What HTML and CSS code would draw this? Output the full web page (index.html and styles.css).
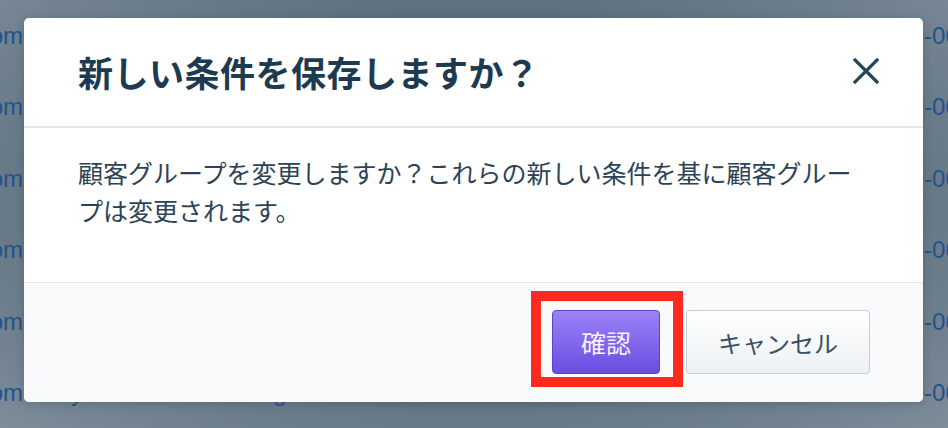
FILE: index.html
```html
<!DOCTYPE html>
<html lang="ja">
<head>
    <meta charset="UTF-8">
    <meta name="viewport" content="width=device-width, initial-scale=1.0">
    <title>条件の保存</title>
    <link rel="stylesheet" href="styles.css">
</head>
<body>
    <!-- Customer list behind the overlay -->
    <div class="customer-list">
        <div class="customer-row"><span class="cell-email">sato@example.com</span><span class="cell-name"></span><span class="cell-tel">090-0000-0000</span></div>
        <div class="customer-row"><span class="cell-email">suzuki@example.com</span><span class="cell-name"></span><span class="cell-tel">090-0000-0000</span></div>
        <div class="customer-row"><span class="cell-email">tanaka@example.com</span><span class="cell-name"></span><span class="cell-tel">090-0000-0000</span></div>
        <div class="customer-row"><span class="cell-email">ito@example.com</span><span class="cell-name"></span><span class="cell-tel">090-0000-0000</span></div>
        <div class="customer-row"><span class="cell-email">kato@example.com</span><span class="cell-name"></span><span class="cell-tel">090-0000-0000</span></div>
        <div class="customer-row"><span class="cell-email">kimura@example.com</span><span class="cell-name">y<span class="gap">taro.yamada@</span>g</span><span class="cell-tel">090-0000-0000</span></div>
    </div>

    <div class="overlay">
        <div class="modal">
            <div class="modal-header">
                <h2>新しい条件を保存しますか？</h2>
                <button class="close-btn" aria-label="閉じる">
                    <svg width="26" height="26" viewBox="0 0 26 26">
                        <path d="M2 2 L24 24 M24 2 L2 24" stroke="#26445a" stroke-width="3.2" stroke-linecap="square" fill="none"/>
                    </svg>
                </button>
            </div>
            <div class="modal-body">
                <p>顧客グループを変更しますか？これらの新しい条件を基に顧客グループは変更されます。</p>
            </div>
            <div class="modal-footer">
                <span class="highlight">
                    <button class="btn btn-primary">確認</button>
                </span>
                <button class="btn btn-default">キャンセル</button>
            </div>
        </div>
    </div>
</body>
</html>
```

FILE: styles.css
```css
/* Basic Reset */
* {
    margin: 0;
    padding: 0;
    box-sizing: border-box;
}

body {
    width: 948px;
    height: 428px;
    overflow: hidden;
    position: relative;
    font-family: "Noto Sans CJK JP", sans-serif;
    background: radial-gradient(ellipse farthest-corner at 50% 45%, #55677a 0%, #5e7080 55%, #7d8c99 100%);
}

/* Background table (dimmed) */
.customer-list {
    font-family: "Liberation Sans", Arial, sans-serif;
    font-size: 24px;
    color: #22548a;
}

.customer-row {
    height: 71.5px;
    display: flex;
    align-items: center;
    white-space: nowrap;
}

.cell-email {
    width: 23px;
    flex-shrink: 0;
    display: flex;
    justify-content: flex-end;
    margin-right: 48px;
}

.cell-name {
    width: 813px;
    flex-shrink: 0;
}

.cell-name .gap {
    display: inline-block;
    width: 190px;
    visibility: hidden;
}

/* Modal */
.overlay {
    position: absolute;
    top: 0;
    left: 0;
    right: 0;
    bottom: 0;
}

.modal {
    position: absolute;
    top: 18px;
    left: 24px;
    width: 899px;
    background-color: white;
    border-radius: 5px;
    overflow: hidden;
    box-shadow: 0 2px 10px rgba(0, 0, 0, 0.15);
}

.modal-header {
    height: 110px;
    display: flex;
    align-items: center;
    justify-content: space-between;
    padding: 0 44px 2px 54px;
    border-bottom: 2px solid #dfe8ec;
}

.modal-header h2 {
    font-size: 35px;
    line-height: 1;
    font-weight: 700;
    letter-spacing: 0.5px;
    color: #1d3a50;
}

.close-btn {
    border: none;
    background: none;
    width: 26px;
    height: 26px;
    display: flex;
}

.modal-body {
    padding: 25px 60px 53px 54px;
    font-size: 25px;
    line-height: 38px;
    color: #2c4357;
}

.modal-footer {
    display: flex;
    justify-content: flex-end;
    gap: 26px;
    padding: 27px 53px 28px;
    background-color: #f8fafc;
    border-top: 1px solid #dfe6ea;
}

.btn {
    height: 64px;
    font-family: "Noto Sans CJK JP", sans-serif;
    font-size: 24px;
    border-radius: 4px;
    cursor: pointer;
}

.btn-primary {
    padding: 0 28px;
    font-size: 25px;
    color: #f4f1ff;
    background: linear-gradient(#9c82f8, #6a4ce0);
    border: 1px solid #5d42cf;
}

.btn-default {
    padding: 0 31px;
    color: #3a4f61;
    background: linear-gradient(#ffffff, #edf1f3);
    border: 1px solid #c3ccd4;
}

/* Red annotation around the confirm button */
.highlight {
    position: relative;
    display: flex;
}

.highlight::after {
    content: "";
    position: absolute;
    top: -19px;
    left: -21px;
    right: -23px;
    bottom: -13px;
    border: 10px solid #ff2a1f;
}
```
